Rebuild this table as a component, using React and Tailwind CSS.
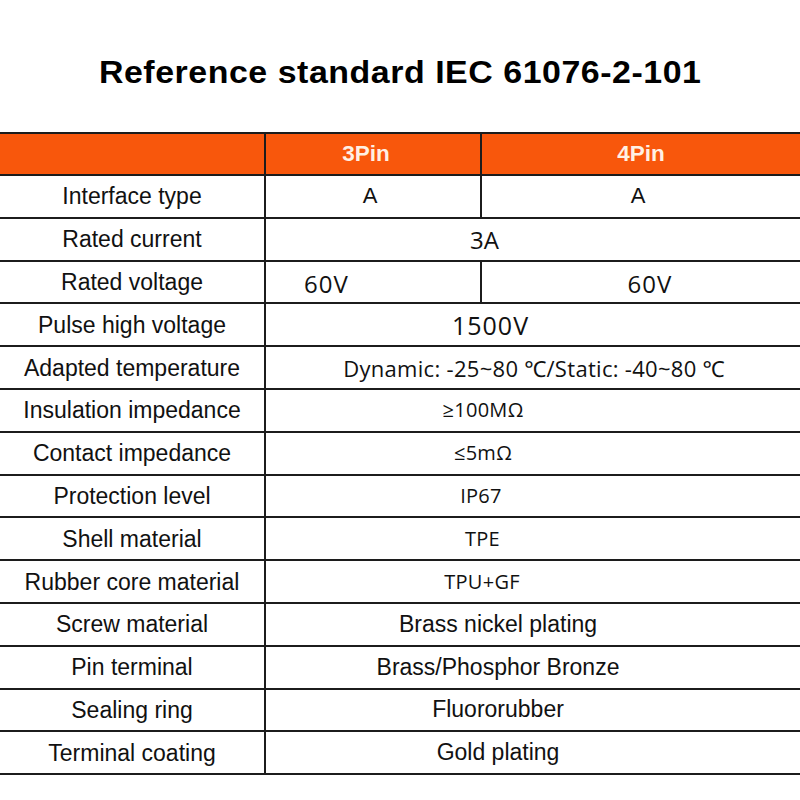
import React from "react";

const ARIAL = { fontFamily: '"Liberation Sans", Arial, sans-serif' };
const YAHEI = { fontFamily: '"Open Sans", "Noto Sans", sans-serif' };

const rows = [
  { label: "Interface type", a: "A", b: "A" },
  { label: "Rated current", span: "3A", shift: "pr-[97px]", cls: "text-[24px] pt-[2px]", yahei: true },
  { label: "Rated voltage", a: "60V", b: "60V", split: true },
  { label: "Pulse high voltage", span: "1500V", shift: "pr-[85px]", cls: "text-[25px] tracking-[1px] pt-[2px]", yahei: true },
  {
    label: "Adapted temperature",
    span: "Dynamic: -25~80 ℃/Static: -40~80 ℃",
    shift: "pl-[2px]",
    cls: "text-[22px] tracking-[0.3px]",
    yahei: true,
  },
  { label: "Insulation impedance", span: "≥100MΩ", shift: "pr-[100px]", cls: "text-[20px] tracking-[0.3px]", yahei: true },
  { label: "Contact impedance", span: "≤5mΩ", shift: "pr-[100px]", cls: "text-[20px] tracking-[0.3px]", yahei: true },
  { label: "Protection level", span: "IP67", shift: "pr-[104px]", cls: "text-[20px] tracking-[0.3px]", yahei: true },
  { label: "Shell material", span: "TPE", shift: "pr-[101px]", cls: "text-[20px] tracking-[0.3px]", yahei: true },
  { label: "Rubber core material", span: "TPU+GF", shift: "pr-[102px]", cls: "text-[20px] tracking-[0.3px]", yahei: true },
  { label: "Screw material", span: "Brass nickel plating", shift: "pr-[70px]", cls: "text-[23px]" },
  { label: "Pin terminal", span: "Brass/Phosphor Bronze", shift: "pr-[70px]", cls: "text-[23px]" },
  { label: "Sealing ring", span: "Fluororubber", shift: "pr-[70px]", cls: "text-[23px]" },
  { label: "Terminal coating", span: "Gold plating", shift: "pr-[70px]", cls: "text-[23px]" },
];

export default function App() {
  return (
    <div className="w-[800px] h-[800px] bg-white text-[#111]" style={ARIAL}>
      <div className="h-[132px] pt-[54px] text-center">
        <h1 className="inline-block scale-x-[1.06] text-[32px] font-bold leading-[36px] tracking-[0.5px] text-black">
          Reference standard IEC 61076-2-101
        </h1>
      </div>

      <table className="w-full border-collapse table-fixed">
        <colgroup>
          <col className="w-[265px]" />
          <col className="w-[216px]" />
          <col />
        </colgroup>
        <thead>
          <tr className="h-[42px] bg-[#f8570c]">
            <th className="border-2 border-l-0 border-[#1c1c1c]" />
            <th className="border-2 border-[#1c1c1c] text-[22.5px] font-bold text-[#fff0e4] pr-[14px]">
              3Pin
            </th>
            <th className="border-2 border-r-0 border-[#1c1c1c] text-[22.5px] font-bold text-[#fff0e4]">
              4Pin
            </th>
          </tr>
        </thead>
        <tbody>
          {rows.map((r) => (
            <tr key={r.label} className="h-[42.8px]">
              <td className="border-2 border-l-0 border-[#1c1c1c] text-center text-[23px] leading-none p-0">
                <div className="pt-[1px]">{r.label}</div>
              </td>
              {r.span ? (
                <td colSpan={2} className="border-2 border-r-0 border-[#1c1c1c] p-0">
                  <div
                    className={`flex justify-center leading-none ${r.shift} ${r.cls}`}
                    style={r.yahei ? YAHEI : undefined}
                  >
                    {r.span}
                  </div>
                </td>
              ) : r.split ? (
                <>
                  <td className="border-2 border-[#1c1c1c] p-0">
                    <div className="pl-[38px] pt-[5px] text-[24px] tracking-[1px] leading-none" style={YAHEI}>
                      {r.a}
                    </div>
                  </td>
                  <td className="border-2 border-r-0 border-[#1c1c1c] p-0">
                    <div
                      className="flex justify-center pl-[18px] pt-[5px] text-[24px] tracking-[1px] leading-none"
                      style={YAHEI}
                    >
                      {r.b}
                    </div>
                  </td>
                </>
              ) : (
                <>
                  <td className="border-2 border-[#1c1c1c] text-center text-[22px] leading-none p-0 pr-[6px]">
                    {r.a}
                  </td>
                  <td className="border-2 border-r-0 border-[#1c1c1c] text-center text-[22px] leading-none p-0 pr-[6px]">
                    {r.b}
                  </td>
                </>
              )}
            </tr>
          ))}
        </tbody>
      </table>
    </div>
  );
}
